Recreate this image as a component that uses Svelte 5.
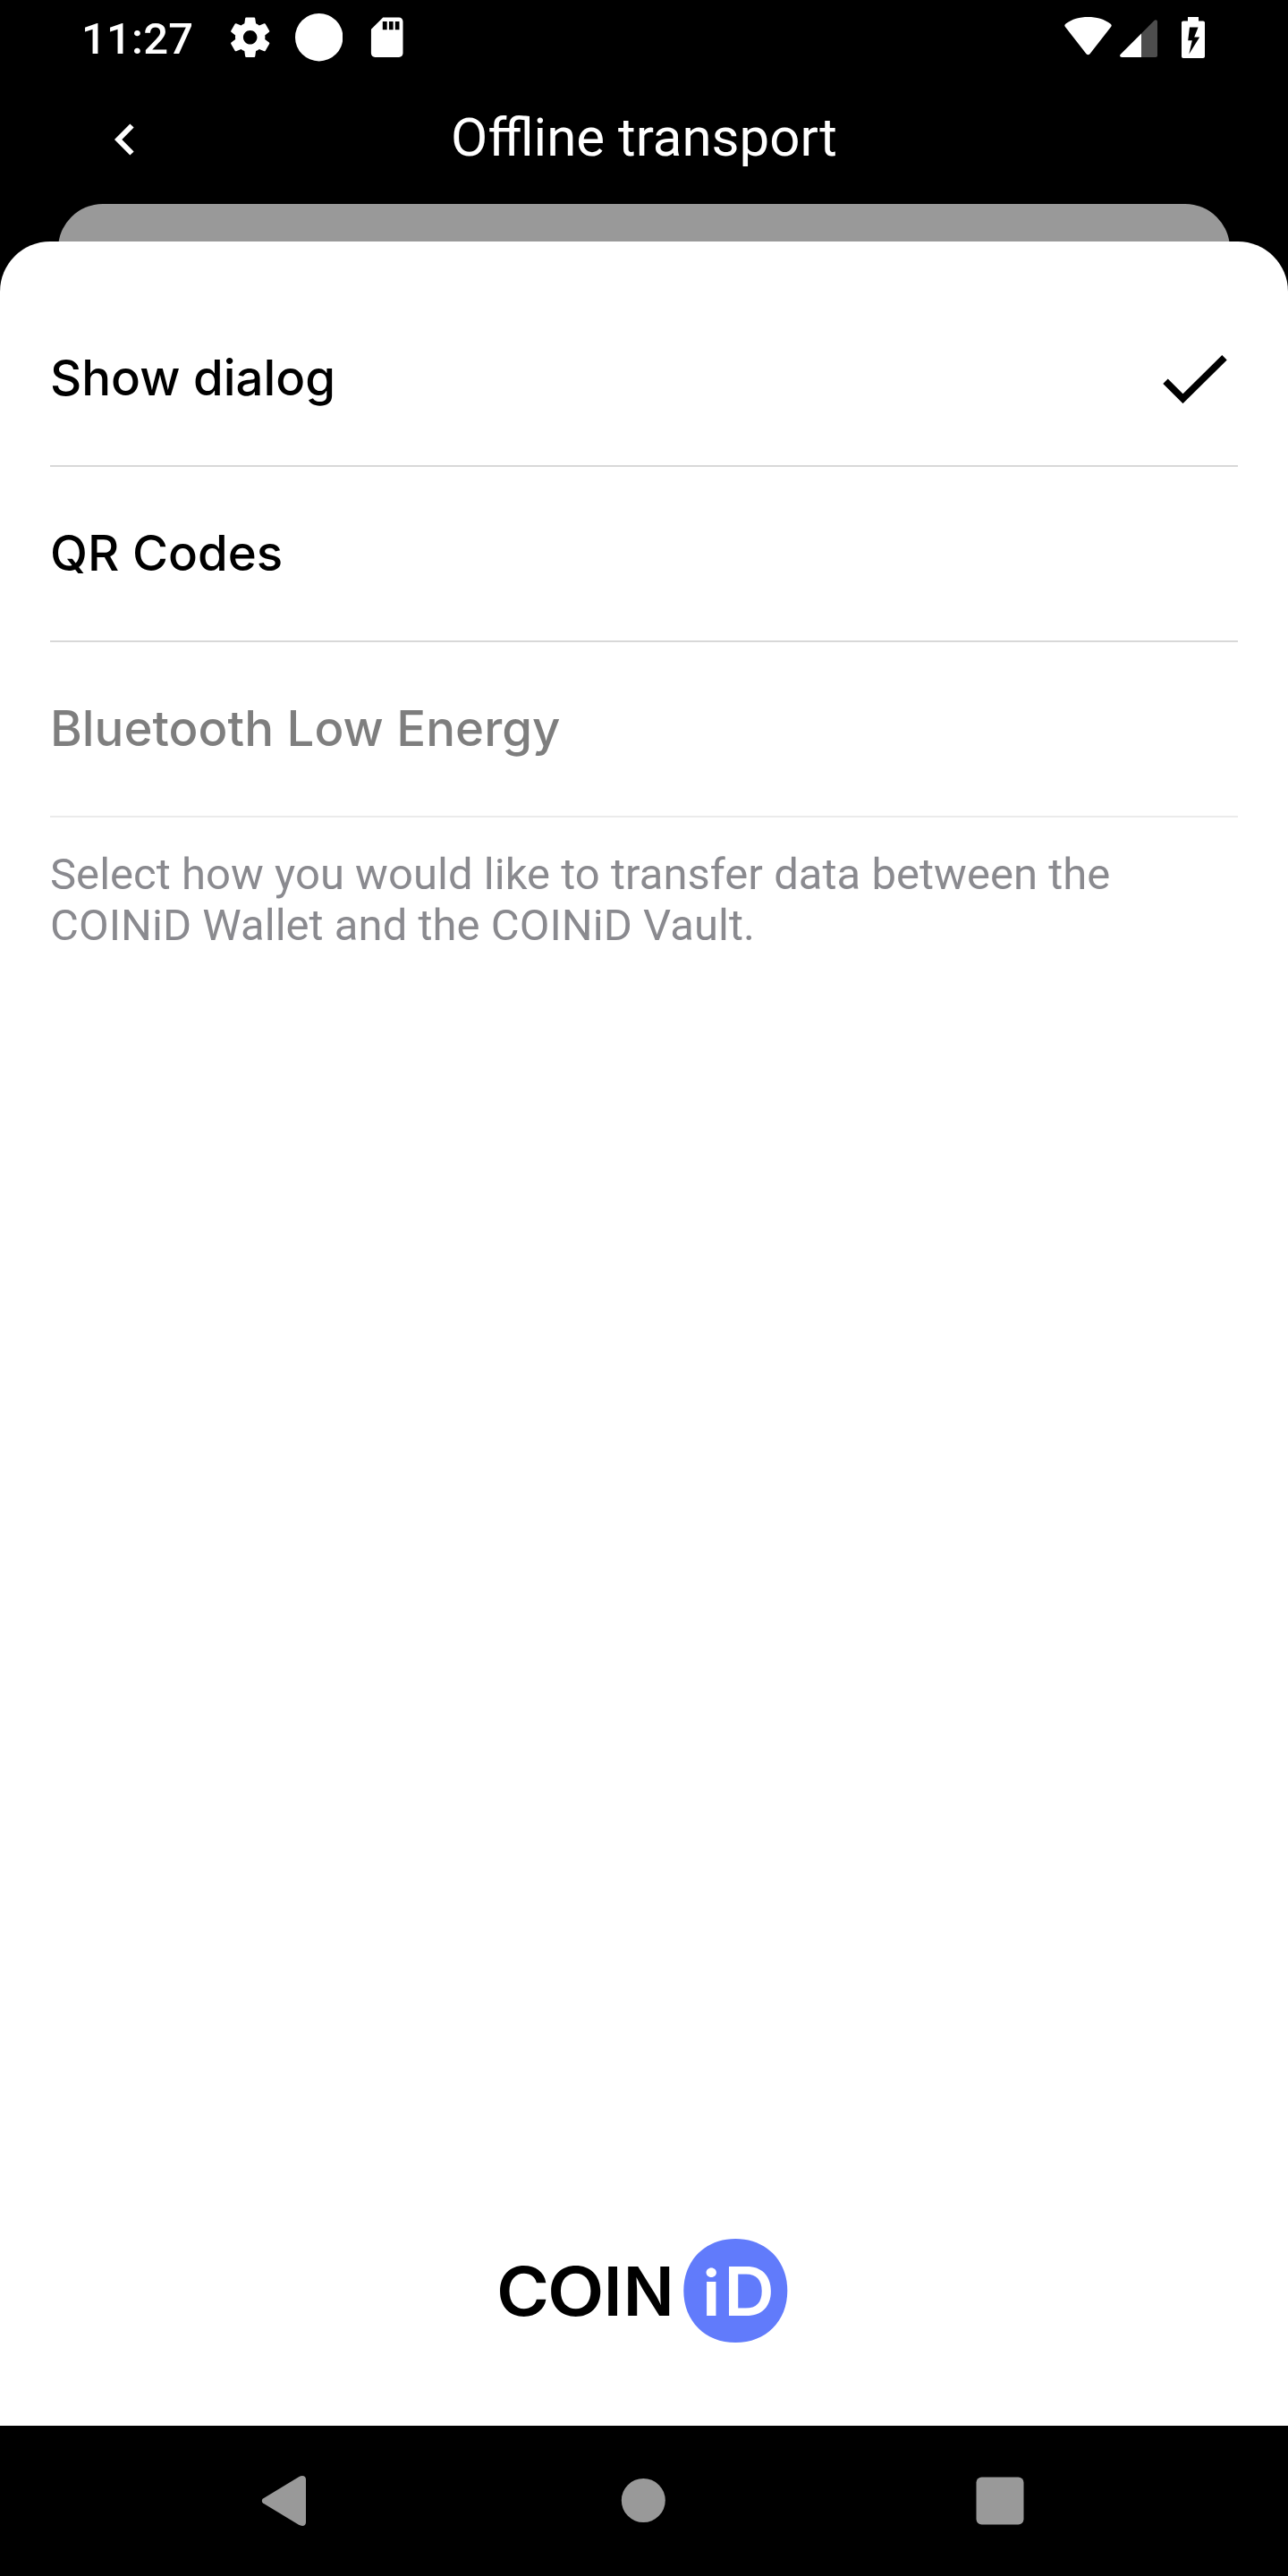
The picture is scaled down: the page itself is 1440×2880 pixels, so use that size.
<script>
  const options = [
    { label: 'Show dialog', selected: true, disabled: false },
    { label: 'QR Codes', selected: false, disabled: false },
    { label: 'Bluetooth Low Energy', selected: false, disabled: true },
  ];
</script>

<div class="screen">
  <div class="status">
    <div class="left">
      <span class="time">11:27</span>
      <svg class="sys" viewBox="0 0 24 24"><path d="M19.43 12.98c.04-.32.07-.64.07-.98s-.03-.66-.07-.98l2.11-1.65c.19-.15.24-.42.12-.64l-2-3.46c-.12-.22-.39-.3-.61-.22l-2.49 1c-.52-.4-1.08-.73-1.69-.98l-.38-2.65C14.46 2.18 14.25 2 14 2h-4c-.25 0-.46.18-.49.42l-.38 2.65c-.61.25-1.17.59-1.69.98l-2.49-1c-.23-.09-.49 0-.61.22l-2 3.46c-.13.22-.07.49.12.64l2.11 1.65c-.04.32-.07.65-.07.98s.03.66.07.98l-2.11 1.65c-.19.15-.24.42-.12.64l2 3.46c.12.22.39.3.61.22l2.49-1c.52.4 1.08.73 1.69.98l.38 2.65c.03.24.24.42.49.42h4c.25 0 .46-.18.49-.42l.38-2.65c.61-.25 1.17-.59 1.69-.98l2.49 1c.23.09.49 0 .61-.22l2-3.46c.12-.22.07-.49-.12-.64l-2.11-1.65zM12 15.5c-1.93 0-3.5-1.57-3.5-3.5s1.57-3.5 3.5-3.5 3.5 1.57 3.5 3.5-1.57 3.5-3.5 3.5z" /></svg>
      <svg class="sys" viewBox="0 0 24 24"><circle cx="12" cy="12" r="12" /></svg>
      <svg class="sys" viewBox="0 0 24 24"><path d="M18 2h-8L4.02 8 4 20c0 1.1.9 2 2 2h12c1.1 0 2-.9 2-2V4c0-1.1-.9-2-2-2zm-6 6.200H9.800V4H12v4.200zm3.100 0h-2.100V4h2.100v4.200zm3.100 0h-2.100V4h2.100v4.200z" /></svg>
    </div>
    <div class="right">
      <svg class="wifi" viewBox="0 0 53 46"><path d="M1.500 11.800C-.3 10.200 0 8.600 1.600 7.500 8.500 2.300 17 0 26.500 0s18 2.300 24.900 7.500c1.600 1.100 1.900 2.700.1 4.300L28.500 41.200c-1.300 1.500-2.700 1.500-4 0z" /></svg>
      <svg class="signal" viewBox="0 0 42 42"><path class="dim" d="M24 15.500 38.200 1.200C39.700-.3 42 .2 42 2.500V40c0 1.200-.8 2-2 2H24z" /><path d="M24 15.500V42H2.500C0 42-.6 40 1 38.500z" /></svg>
      <svg class="battery" viewBox="0 0 26 46"><path fill-rule="evenodd" d="M7 0h12v4.500h5c1.200 0 2 .8 2 2V44c0 1.200-.8 2-2 2H2c-1.200 0-2-.8-2-2V6.500c0-1.200.8-2 2-2h5zM9 11.500 7.200 26.200h4.600L8.300 41.500 20.200 22.500h-6L18.600 11.500z" /></svg>
    </div>
  </div>

  <header>
    <svg class="back" viewBox="0 0 24 38"><path d="M20.500 3.500 5.200 19l15.300 15.500" /></svg>
    <h1>Offline transport</h1>
  </header>

  <div class="previous"></div>
  <main>
    {#each options as option}
      <div class="row" class:disabled={option.disabled}>
        <span>{option.label}</span>
        {#if option.selected}
          <svg class="check" viewBox="0 0 72 56"><path d="M3 31.200 22.500 50.700 69 4.700" /></svg>
        {/if}
      </div>
    {/each}
    <p>Select how you would like to transfer data between the COINiD Wallet and the COINiD Vault.</p>
    <svg class="logo" viewBox="-10 0 346 120">
      <path class="badge" d="M265.300 1.900C299.300 1.900 323.300 26 323.300 60S299.300 118.100 265.300 118.100 207.300 94 207.300 60 231.300 1.900 265.300 1.900z" />
      <text transform="translate(-2 88.300) scale(1.070 1)">C</text>
      <text transform="translate(54.900 88.300) scale(1.100 1)">O</text>
      <text x="117.700" y="88.300">I</text>
      <text x="139.700" y="88.300">N</text>
      <text class="light dot" x="228.700" y="87.700">i</text>
      <text class="light" transform="translate(252.200 87.700) scale(1.045 1)">D</text>
    </svg>
  </main>

  <nav>
    <svg viewBox="0 0 56 56"><path d="M2 25.500 42 1.200C46 -1 50 0 50 4V52C50 56 46 57 42 54.800L2 30.500C.4 29.300.4 26.700 2 25.500z" /></svg>
    <svg viewBox="0 0 56 56"><circle cx="28.300" cy="27.500" r="24.500" /></svg>
    <svg viewBox="0 0 56 56"><rect x="1.500" y="1.500" width="53" height="53" rx="6" /></svg>
  </nav>
</div>

<style>
  :global(body) { margin: 0; background: #000; }
  .screen { width: 1440px; height: 2880px; background: #000; display: flex; flex-direction: column; font-family: Roboto, sans-serif; overflow: hidden; }
  svg { display: block; flex: none; }
  .status { height: 84px; box-sizing: border-box; padding: 0 93px 0 91px; display: flex; justify-content: space-between; fill: #fff; }
  .left, .right { display: flex; align-items: center; }
  .left { gap: 23.400px; }
  .time { width: 138.500px; color: #fff; font-size: 49px; font-weight: 500; letter-spacing: .2px; line-height: 84px; padding-top: 4px; }
  .sys { width: 53.400px; height: 53.400px; }
  .wifi { width: 53px; height: 46px; margin-right: 9px; }
  .signal { width: 42px; height: 42px; margin-right: 27px; margin-top: 2px; }
  .battery { width: 26px; height: 46px; }
  .dim { fill: #4d4d4d; }
  header { height: 144px; display: grid; grid-template-columns: 152px 1fr 152px; }
  .back { width: 24px; height: 38px; justify-self: end; margin: 53px 1px 0 0; fill: none; stroke: #fff; stroke-width: 6; }
  h1 { margin: 0; color: #fff; font-size: 60px; line-height: 70px; font-weight: 400; text-align: center; padding-top: 35px; }
  .previous { height: 56px; margin: 0 65px -14px; background: #999; border-radius: 50px 50px 0 0; }
  main { flex: 1; background: #fff; border-radius: 56px 56px 0 0; padding: 56px 56px 91px; display: flex; flex-direction: column; }
  .row { height: 196px; box-sizing: border-box; border-bottom: 2px solid #d8d8d8; display: flex; align-items: center; justify-content: space-between; font-family: Inter, sans-serif; font-weight: 500; font-size: 54.600px; color: #000; }
  .row span { padding-bottom: 2px; }
  .row.disabled { opacity: .5; }
  .check { width: 72px; height: 56px; margin-right: 12px; fill: none; stroke: #000; stroke-width: 7.700; }
  p { margin: 35px 0 0; color: #8a8a8f; font-size: 49px; line-height: 57px; letter-spacing: .03px; }
  .logo { width: 346px; height: 120px; margin: auto auto 0; font-family: Inter, sans-serif; font-weight: 600; font-size: 75px; }
  .badge { fill: #617bfb; }
  .light { fill: #fff; }
  .dot { font-size: 70px; font-weight: 700; }
  nav { height: 168px; padding-left: 292px; display: grid; grid-template-columns: 56px 56px 56px; gap: 343px; align-items: center; fill: #999; }
  nav svg { width: 56px; height: 56px; }
</style>
